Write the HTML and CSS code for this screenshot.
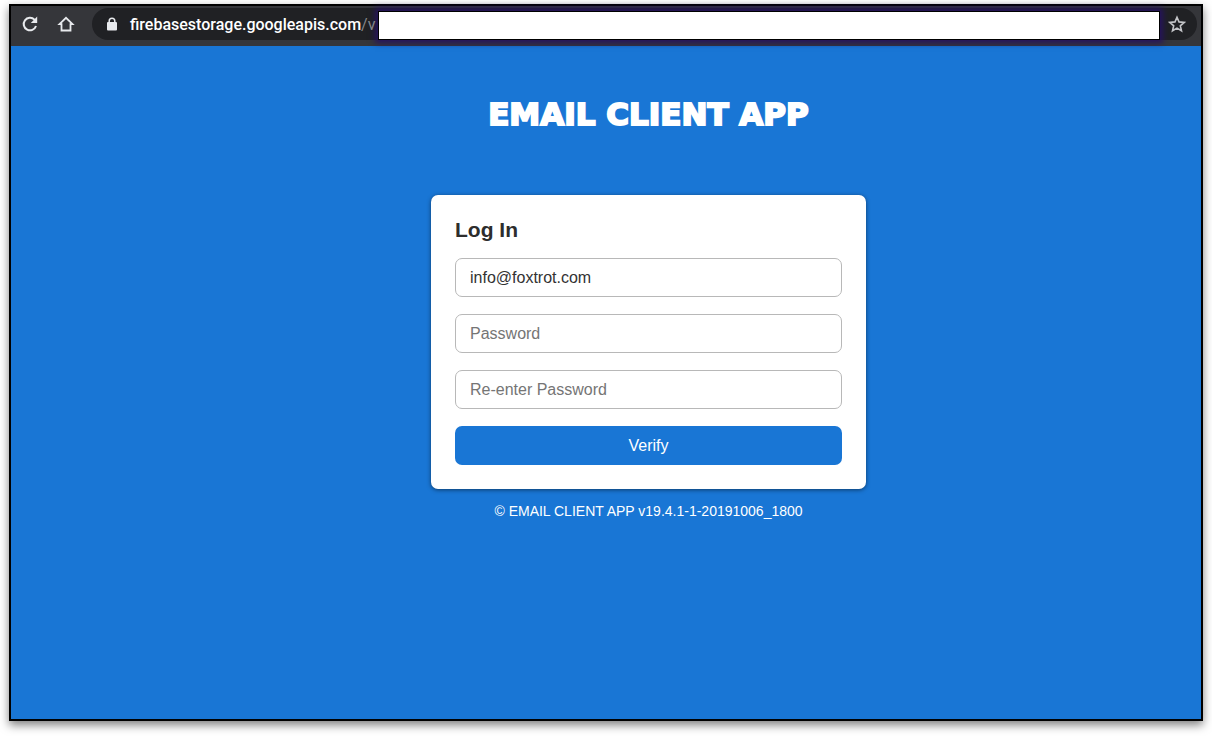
FILE: index.html
```
<!DOCTYPE html>
<html lang="en">
<head>
<meta charset="utf-8">
<title>Email Client App</title>
<link rel="stylesheet" href="styles.css">
</head>
<body>
<div class="browser">
  <header class="toolbar">
    <button class="tool" type="button" aria-label="Reload">
      <svg width="18" height="18" viewBox="0 0 18 18"><path d="M15 11A6.3 6.3 0 1 1 13.5 4.6L15 6" fill="none" stroke="currentColor" stroke-width="2"/><path d="M16.2 1.6V8H9.8z" fill="currentColor"/></svg>
    </button>
    <button class="tool" type="button" aria-label="Home">
      <svg width="18" height="18" viewBox="0 0 18 18"><path d="M2.500 9.200L9 2.800l6.500 6.400h-2V15.500h-9V9.200z" fill="none" stroke="currentColor" stroke-width="1.800"/></svg>
    </button>
    <div class="address">
      <svg class="lock" width="12" height="14" viewBox="0 0 12 14"><path d="M3.200 6V4a2.800 2.800 0 0 1 5.600 0v2" fill="none" stroke="currentColor" stroke-width="1.500"/><rect x="1" y="5" width="10" height="8.500" rx="1" fill="currentColor"/></svg>
      <span class="url">firebasestorage.googleapis.com<span class="path">/v</span></span>
      <div class="redaction"></div>
      <button class="star" type="button" aria-label="Bookmark this page">
        <svg width="18" height="18" viewBox="0 0 18 18"><path d="M9 2.200l2 4.700 5.200.5-3.900 3.400 1.200 5L9 13.100l-4.500 2.700 1.200-5L1.800 7.400 7 6.900z" fill="none" stroke="currentColor" stroke-width="1.600"/></svg>
      </button>
    </div>
  </header>
  <main class="page">
    <h1 class="brand">EMAIL CLIENT APP</h1>
    <form class="card">
      <h2 class="heading">Log In</h2>
      <input class="field" type="email" value="info@foxtrot.com" aria-label="Email">
      <input class="field" type="password" placeholder="Password" aria-label="Password">
      <input class="field" type="password" placeholder="Re-enter Password" aria-label="Re-enter Password">
      <button class="verify" type="button">Verify</button>
    </form>
    <p class="version">© EMAIL CLIENT APP v19.4.1-1-20191006_1800</p>
  </main>
</div>
</body>
</html>
```

FILE: styles.css
```
* {
  box-sizing: border-box;
}

body {
  margin: 0;
  min-height: 100vh;
  padding: 4px 9px 15px;
  display: flex;
  background: #fff;
  font-family: "Liberation Sans", Arial, sans-serif;
}

button {
  padding: 0;
  border: 0;
  background: none;
  font: inherit;
}

svg {
  display: block;
}

.browser {
  flex: 1;
  display: flex;
  flex-direction: column;
  border: 2px solid #000;
  background: #1976d5;
  box-shadow: 0 4px 9px rgba(0, 0, 0, 0.5);
}

.toolbar {
  display: flex;
  align-items: center;
  height: 40px;
  padding: 0 4px 4px 10px;
  background: #35363a;
}

.tool {
  margin-right: 18px;
  color: #e8eaed;
}

.address {
  flex: 1;
  display: flex;
  align-items: center;
  height: 32px;
  margin-left: -1px;
  padding: 0 11px 0 14px;
  border-radius: 16px;
  background: #202124;
  color: #e8eaed;
}

.url {
  position: relative;
  z-index: 1;
  flex: none;
  width: 248px;
  margin-left: 12px;
  white-space: nowrap;
  font-family: Roboto, sans-serif;
  font-size: 16px;
  font-weight: 500;
  color: #fff;
}

.path {
  font-weight: 400;
  color: #85868a;
}

.redaction {
  position: relative;
  flex: 1;
  height: 29px;
  margin: 2px 8px 0 0;
  border: 1px solid #000;
  background: #fff;
  box-shadow: 0 0 6px 3px #25125f;
}

.star {
  color: #c4c5c8;
}

.page {
  display: flex;
  flex-direction: column;
  align-items: center;
  padding: 48px 0 48px 85px;
}

.brand {
  margin: 0 0 61px;
  font-family: "DejaVu Sans", sans-serif;
  font-size: 31px;
  font-weight: 700;
  line-height: 40px;
  color: #fff;
  -webkit-text-stroke: 2px #fff;
}

.card {
  display: flex;
  flex-direction: column;
  gap: 17px;
  width: 100%;
  max-width: 435px;
  padding: 23px 24px 24px;
  border-radius: 7px;
  background: #fff;
  box-shadow: 0 1px 4px rgba(0, 0, 0, 0.5);
}

.heading {
  margin: 0;
  font-size: 21px;
  line-height: 23px;
  color: #2d2d2d;
}

.field {
  width: 100%;
  height: 39px;
  padding: 0 14px;
  border: 1px solid #b8b8b8;
  border-radius: 7px;
  background: #fff;
  font: 16px "Liberation Sans", Arial, sans-serif;
  color: #333;
}

.field::placeholder {
  color: #757575;
}

.verify {
  height: 39px;
  border-radius: 7px;
  background: #1976d5;
  font-size: 16px;
  color: #fff;
}

.version {
  margin: 13px 0 0;
  font-size: 14px;
  line-height: 18px;
  color: #fff;
}
```
